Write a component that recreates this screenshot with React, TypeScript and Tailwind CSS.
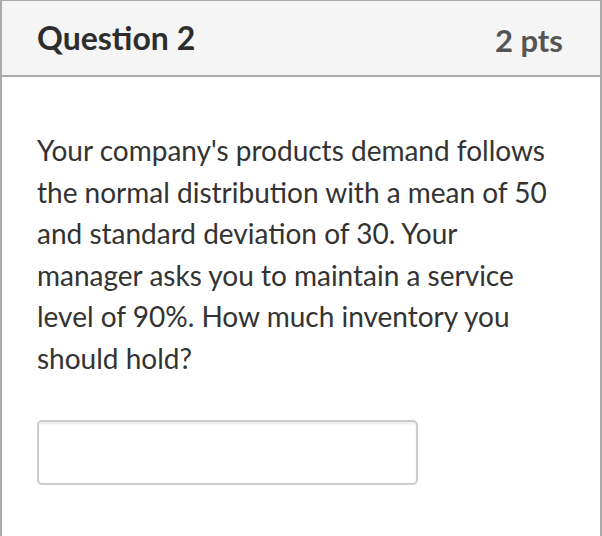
import React from 'react';

export default function App() {
  return (
    <div className="w-[602px] h-[536px] bg-white font-['Lato','Liberation_Sans',sans-serif] text-[#333]">
      <div className="h-full border-2 border-b-0 border-[#aaa] border-t-[1px] flex flex-col">
        {/* header */}
        <div className="h-[76px] bg-[#f5f5f5] border-b-2 border-[#aaa] flex items-center justify-between pl-[35px] pr-[37px]">
          <div className="text-[32px] font-bold text-[#2d2d2d]">Question 2</div>
          <div className="text-[31px] font-bold text-[#555] mt-[4px]">2 pts</div>
        </div>

        {/* body */}
        <div className="pl-[35px] pr-[20px] pt-[53px]">
          <p className="text-[28px] leading-[41.5px] text-[#333] w-[530px]">
            Your company's products demand follows the normal distribution with a mean of 50 and
            standard deviation of 30. Your manager asks you to maintain a service level of 90%. How
            much inventory you should hold?
          </p>
          <input
            type="text"
            className="mt-[41px] w-[381px] h-[65px] border-2 border-[#ccc] rounded-[5px] shadow-[inset_0_2px_2px_rgba(0,0,0,0.08)] outline-none px-2"
          />
        </div>
      </div>
    </div>
  );
}
